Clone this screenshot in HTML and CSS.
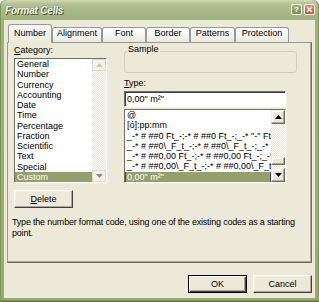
FILE: index.html
```html
<!DOCTYPE html>
<html>
<head>
<meta charset="utf-8">
<link rel="stylesheet" href="styles.css">
</head>
<body>
<div class="window">
  <div class="titlebar">
    <span class="title">Format Cells</span>
    <div class="caption-btns">
      <span class="cbtn help">?</span>
      <span class="cbtn close"><svg width="7" height="7" viewBox="0 0 7 7"><path d="M1 1L6 6M6 1L1 6" stroke="#fff" stroke-width="1.6"/></svg></span>
    </div>
  </div>
  <div class="client">
    <div class="tabs">
      <div class="tab active w-number">Number</div>
      <div class="tab w-align">Alignment</div>
      <div class="tab w-font">Font</div>
      <div class="tab w-border">Border</div>
      <div class="tab w-patterns">Patterns</div>
      <div class="tab w-protection">Protection</div>
    </div>
    <div class="panel">
      <div class="cols">
        <div class="left">
          <div class="label"><span class="u">C</span>ategory:</div>
          <div class="listbox cat">
            <div class="items">
              <div class="item">General</div>
              <div class="item">Number</div>
              <div class="item">Currency</div>
              <div class="item">Accounting</div>
              <div class="item">Date</div>
              <div class="item">Time</div>
              <div class="item">Percentage</div>
              <div class="item">Fraction</div>
              <div class="item">Scientific</div>
              <div class="item">Text</div>
              <div class="item">Special</div>
              <div class="item sel">Custom</div>
            </div>
            <div class="sb sb-xp">
              <div class="sbtn up disabled"><svg width="7" height="4" viewBox="0 0 7 4"><path d="M3.5 0L7 4H0Z"/></svg></div>
              <div class="track"></div>
              <div class="sbtn down"><svg width="7" height="4" viewBox="0 0 7 4"><path d="M0 0H7L3.5 4Z"/></svg></div>
            </div>
          </div>
          <button class="btn delete"><span class="u">D</span>elete</button>
        </div>
        <div class="right">
          <fieldset class="group">
            <legend>Sample</legend>
          </fieldset>
          <div class="label type-label"><span class="u">T</span>ype:</div>
          <div class="textbox">0,00" m²"</div>
          <div class="listbox fmt">
            <div class="items">
              <div class="item">@</div>
              <div class="item">[ó]:pp:mm</div>
              <div class="item">_-* # ##0 Ft_-;-* # ##0 Ft_-;_-* "-" Ft_-;_-@_-</div>
              <div class="item">_-* # ##0\_F_t_-;-* # ##0\_F_t_-;_-* "-"\_F_t_-;_-@_-</div>
              <div class="item">_-* # ##0,00 Ft_-;-* # ##0,00 Ft_-;_-* "-"?? Ft_-;_-@_-</div>
              <div class="item">_-* # ##0,00\_F_t_-;-* # ##0,00\_F_t_-;_-* "-"??\_F_t_-;_-@_-</div>
              <div class="item sel focus">0,00" m²"</div>
            </div>
            <div class="sb sb-classic">
              <div class="sbtn big"><svg width="7" height="4" viewBox="0 0 7 4"><path d="M3.5 0L7 4H0Z"/></svg></div>
              <div class="track t1"></div>
              <div class="thumb"></div>
              <div class="track t2"></div>
              <div class="sbtn big"><svg width="7" height="4" viewBox="0 0 7 4"><path d="M0 0H7L3.5 4Z"/></svg></div>
            </div>
          </div>
        </div>
      </div>
      <p class="desc">Type the number format code, using one of the existing codes as a starting point.</p>
    </div>
    <div class="actions">
      <button class="btn default">OK</button>
      <button class="btn">Cancel</button>
    </div>
  </div>
</div>
</body>
</html>
```
FILE: styles.css
```css
* { box-sizing: border-box; }
html, body { margin: 0; padding: 0; }
body {
  width: 319px;
  height: 302px;
  overflow: hidden;
  background: #fff;
  font-family: "Liberation Sans", Arial, sans-serif;
  font-size: 9px;
  color: #000;
}

.window {
  width: 319px;
  height: 302px;
  display: flex;
  flex-direction: column;
  padding: 0 4px 4px;
  border-radius: 6px 6px 0 0;
  background: linear-gradient(#d0d9b6 0, #b3c193 4px, #a7b786 12px, #9fb17c 20px, #97ab72 100%);
  box-shadow: inset 1px 0 #7f965b, inset -1px 0 #7f965b, inset 0 -1px #5d7638, inset 0 -2px #7b9356;
}

.titlebar {
  height: 20px;
  display: flex;
  align-items: center;
  padding-left: 1px;
}
.title {
  font-weight: bold;
  font-style: italic;
  font-size: 10px;
  color: #fff;
  letter-spacing: -0.2px;
  text-shadow: 1px 1px 0 #45542b, 0 0 1px #45542b;
}
.caption-btns {
  margin-left: auto;
  display: flex;
  gap: 2px;
  margin-top: -1px;
}
.cbtn {
  width: 11px;
  height: 11px;
  border: 1px solid #fff;
  border-radius: 2px;
  display: flex;
  align-items: center;
  justify-content: center;
  color: #fff;
  font-weight: bold;
  font-size: 8px;
  line-height: 9px;
}
.help { background: linear-gradient(#a3b27c, #7d8f53); }
.close { background: linear-gradient(#ea8b6a, #cc4b2a); }

.client {
  flex: 1;
  background: #ece9d8;
  padding: 4px 3px 0;
  display: flex;
  flex-direction: column;
}

.tabs {
  display: flex;
  align-items: flex-end;
  height: 19px;
  margin-left: 1px;
  position: relative;
  z-index: 1;
}
.tab {
  height: 15px;
  margin-bottom: 1px;
  border: 1px solid #919b9c;
  border-bottom: none;
  border-radius: 3px 3px 0 0;
  background: linear-gradient(#ffffff, #f4f3ee 60%, #e9e7dc);
  line-height: 11px;
  text-align: center;
}
.tab.active {
  height: 19px;
  margin-bottom: 0;
  padding-top: 3px;
  background: linear-gradient(#fbfaf6, #ece9d8);
}
.w-number { width: 44px; }
.w-align { width: 50px; }
.w-font { width: 44px; }
.w-border { width: 44px; }
.w-patterns { width: 45px; }
.w-protection { width: 54px; }

.panel {
  margin-top: -1px;
  height: 221px;
  border: 1px solid #919b9c;
  border-right-color: #6f6d63;
  border-bottom-color: #6f6d63;
  box-shadow: inset -1px -1px 0 #aca899;
  background: #ece9d8;
  padding: 2px 4px 0;
}

.cols { display: flex; }
.left { width: 93px; margin-left: 2px; }
.right { width: 173px; margin-left: 17px; }

.label {
  height: 11px;
  line-height: 11px;
  margin-bottom: 2px;
  white-space: nowrap;
}
.u { text-decoration: underline; }

.listbox {
  display: flex;
  background: #fff;
  border: 1px solid;
  border-color: #716f64 #fff #fff #716f64;
  box-shadow: 1px 1px 0 #f1efe2;
  overflow: hidden;
}
.cat { height: 125px; width: 93px; }
.fmt { height: 74px; width: 162px; margin-top: 2px; }

.items { flex: 1; overflow: hidden; min-width: 0; }
.item {
  height: 10.25px;
  line-height: 10.25px;
  padding-left: 2px;
  white-space: nowrap;
  overflow: hidden;
}
.fmt .item { height: 10.3px; line-height: 10.3px; }
.item.sel { background: #939f6c; color: #fff; }
.item.focus { box-shadow: inset 1px 0 #4b3f7e, inset -1px 0 #4b3f7e; }

.sb { width: 14px; display: flex; flex-direction: column; flex-shrink: 0; }
.track {
  flex: 1;
  background: repeating-conic-gradient(#fbfaf6 0 25%, #ebe8da 0 50%) 0 0 / 2px 2px;
}
.sb-xp .sbtn {
  height: 12px;
  display: flex;
  align-items: center;
  justify-content: center;
  background: #f3f2ea;
  border: 1px solid #dcd9c8;
  fill: #8d8a7a;
}
.sb-xp .sbtn.disabled { fill: #c9c6b6; }

.sb-classic .sbtn {
  height: 14px;
  display: flex;
  align-items: center;
  justify-content: center;
  background: #ece9d8;
  border: 1px solid;
  border-color: #f1efe2 #716f64 #716f64 #f1efe2;
  box-shadow: inset -1px -1px 0 #aca899, inset 1px 1px 0 #fff;
  fill: #000;
}
.t1 { flex: 0 0 33px; }
.t2 { flex: 0 0 3px; }
.thumb {
  height: 8px;
  background: #ece9d8;
  border: 1px solid;
  border-color: #f1efe2 #716f64 #716f64 #f1efe2;
  box-shadow: inset -1px -1px 0 #aca899, inset 1px 1px 0 #fff;
}

.group {
  margin: -1px 0 0;
  padding: 0;
  width: 173px;
  height: 29px;
  border: 1px solid #d0d0bf;
  border-radius: 3px;
  min-width: 0;
}
.group legend {
  padding: 0 1px 4px;
  margin-left: 2px;
  line-height: 10px;
  font-size: 9px;
}
.type-label { margin-top: 5px; }

.textbox {
  width: 162px;
  height: 16px;
  background: #fff;
  border: 1px solid;
  border-color: #716f64 #fff #fff #716f64;
  box-shadow: inset 1px 1px 0 #404040, 1px 1px 0 #f1efe2;
  padding-left: 2px;
  line-height: 14px;
  white-space: nowrap;
}

.btn {
  width: 59px;
  height: 18px;
  padding: 0;
  font: inherit;
  color: #000;
  background: #ece9d8;
  border: 1px solid;
  border-color: #fff #404040 #404040 #fff;
  box-shadow: inset -1px -1px 0 #aca899, inset 1px 1px 0 #f1efe2;
  line-height: 14px;
  text-align: center;
}
.delete { margin-top: 7px; display: block; }
.btn.default {
  border: 1px solid #000;
  box-shadow: inset 1px 1px 0 #fff, inset -1px -1px 0 #404040, inset -2px -2px 0 #aca899;
}

.desc {
  margin: 9px 0 0;
  line-height: 11px;
  width: 297px;
  letter-spacing: -0.2px;
}

.actions {
  display: flex;
  justify-content: flex-end;
  gap: 6px;
  margin-top: 12px;
}
```
